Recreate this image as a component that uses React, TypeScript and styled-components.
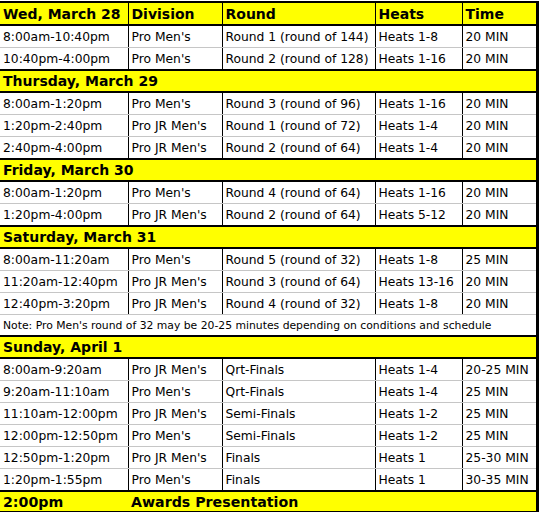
import React from 'react';
import styled, { createGlobalStyle } from 'styled-components';

type Slot = [string, string, string, string, string];

type Day = {
  title: string;
  slots: Slot[];
  note?: string;
};

const firstDay: Slot[] = [
  ['8:00am-10:40pm', "Pro Men's", 'Round 1 (round of 144)', 'Heats 1-8', '20 MIN'],
  ['10:40pm-4:00pm', "Pro Men's", 'Round 2 (round of 128)', 'Heats 1-16', '20 MIN'],
];

const days: Day[] = [
  {
    title: 'Thursday, March 29',
    slots: [
      ['8:00am-1:20pm', "Pro Men's", 'Round 3 (round of 96)', 'Heats 1-16', '20 MIN'],
      ['1:20pm-2:40pm', "Pro JR Men's", 'Round 1 (round of 72)', 'Heats 1-4', '20 MIN'],
      ['2:40pm-4:00pm', "Pro JR Men's", 'Round 2 (round of 64)', 'Heats 1-4', '20 MIN'],
    ],
  },
  {
    title: 'Friday, March 30',
    slots: [
      ['8:00am-1:20pm', "Pro Men's", 'Round 4 (round of 64)', 'Heats 1-16', '20 MIN'],
      ['1:20pm-4:00pm', "Pro JR Men's", 'Round 2 (round of 64)', 'Heats 5-12', '20 MIN'],
    ],
  },
  {
    title: 'Saturday, March 31',
    slots: [
      ['8:00am-11:20am', "Pro Men's", 'Round 5 (round of 32)', 'Heats 1-8', '25 MIN'],
      ['11:20am-12:40pm', "Pro JR Men's", 'Round 3 (round of 64)', 'Heats 13-16', '20 MIN'],
      ['12:40pm-3:20pm', "Pro JR Men's", 'Round 4 (round of 32)', 'Heats 1-8', '20 MIN'],
    ],
    note: "Note: Pro Men's round of 32 may be 20-25 minutes depending on conditions and schedule",
  },
  {
    title: 'Sunday, April 1',
    slots: [
      ['8:00am-9:20am', "Pro JR Men's", 'Qrt-Finals', 'Heats 1-4', '20-25 MIN'],
      ['9:20am-11:10am', "Pro Men's", 'Qrt-Finals', 'Heats 1-4', '25 MIN'],
      ['11:10am-12:00pm', "Pro JR Men's", 'Semi-Finals', 'Heats 1-2', '25 MIN'],
      ['12:00pm-12:50pm', "Pro Men's", 'Semi-Finals', 'Heats 1-2', '25 MIN'],
      ['12:50pm-1:20pm', "Pro JR Men's", 'Finals', 'Heats 1', '25-30 MIN'],
      ['1:20pm-1:55pm', "Pro Men's", 'Finals', 'Heats 1', '30-35 MIN'],
    ],
  },
];

function SlotRow({ slot }: { slot: Slot }) {
  return (
    <tr>
      {slot.map((text, i) => (
        <DataCell key={i} $first={i === 0}>
          {text}
        </DataCell>
      ))}
    </tr>
  );
}

export default function App() {
  return (
    <>
      <GlobalStyle />
      <Sheet>
        <colgroup>
          <col style={{ width: 128 }} />
          <col style={{ width: 94 }} />
          <col style={{ width: 153 }} />
          <col style={{ width: 87 }} />
          <col style={{ width: 75 }} />
        </colgroup>
        <tbody>
          <tr>
            <HeadCell $first>Wed, March 28</HeadCell>
            <HeadCell>Division</HeadCell>
            <HeadCell>Round</HeadCell>
            <HeadCell>Heats</HeadCell>
            <HeadCell>Time</HeadCell>
          </tr>
          {firstDay.map((slot) => (
            <SlotRow key={slot[0]} slot={slot} />
          ))}
          {days.map((day) => (
            <React.Fragment key={day.title}>
              <tr>
                <DayCell colSpan={5}>{day.title}</DayCell>
              </tr>
              {day.slots.map((slot) => (
                <SlotRow key={slot[0]} slot={slot} />
              ))}
              {day.note && (
                <tr>
                  <NoteCell colSpan={5}>{day.note}</NoteCell>
                </tr>
              )}
            </React.Fragment>
          ))}
          <tr>
            <AwardCell>2:00pm</AwardCell>
            <AwardCell colSpan={4}>Awards Presentation</AwardCell>
          </tr>
        </tbody>
      </Sheet>
    </>
  );
}

const GlobalStyle = createGlobalStyle`
  body {
    margin: 0;
    background: #ffffff;
    font-family: "DejaVu Sans", Verdana, sans-serif;
    color: #000000;
  }
`;

const Sheet = styled.table`
  border-collapse: collapse;
  table-layout: fixed;
  width: 537px;
  margin-top: 1px;
  border-right: 3px solid #000000;
  border-top: 2px solid #000000;
`;

const Cell = styled.td`
  height: 21px;
  padding: 0 0 0 3px;
  white-space: nowrap;
  overflow: hidden;
  vertical-align: middle;
`;

const DataCell = styled(Cell)<{ $first?: boolean }>`
  font-size: 12.3px;
  border-bottom: 1px solid #c6c6c6;
  border-left: ${({ $first }) => ($first ? 'none' : '1px solid #000000')};
`;

const HeadCell = styled(Cell)<{ $first?: boolean }>`
  background: #ffff00;
  font-weight: bold;
  font-size: 14px;
  border-bottom: 2px solid #000000;
  border-left: ${({ $first }) => ($first ? 'none' : '1px solid #000000')};
`;

const DayCell = styled(Cell)`
  height: 20px;
  background: #ffff00;
  font-weight: bold;
  font-size: 14px;
  border-top: 2px solid #000000;
  border-bottom: 2px solid #000000;
`;

const NoteCell = styled(Cell)`
  height: 20px;
  font-size: 10.8px;
  border-bottom: 1px solid #c6c6c6;
`;

const AwardCell = styled(Cell)`
  height: 19px;
  background: #ffff00;
  font-weight: bold;
  font-size: 14.2px;
  border-top: 2px solid #000000;
  border-bottom: 2px solid #000000;
`;
